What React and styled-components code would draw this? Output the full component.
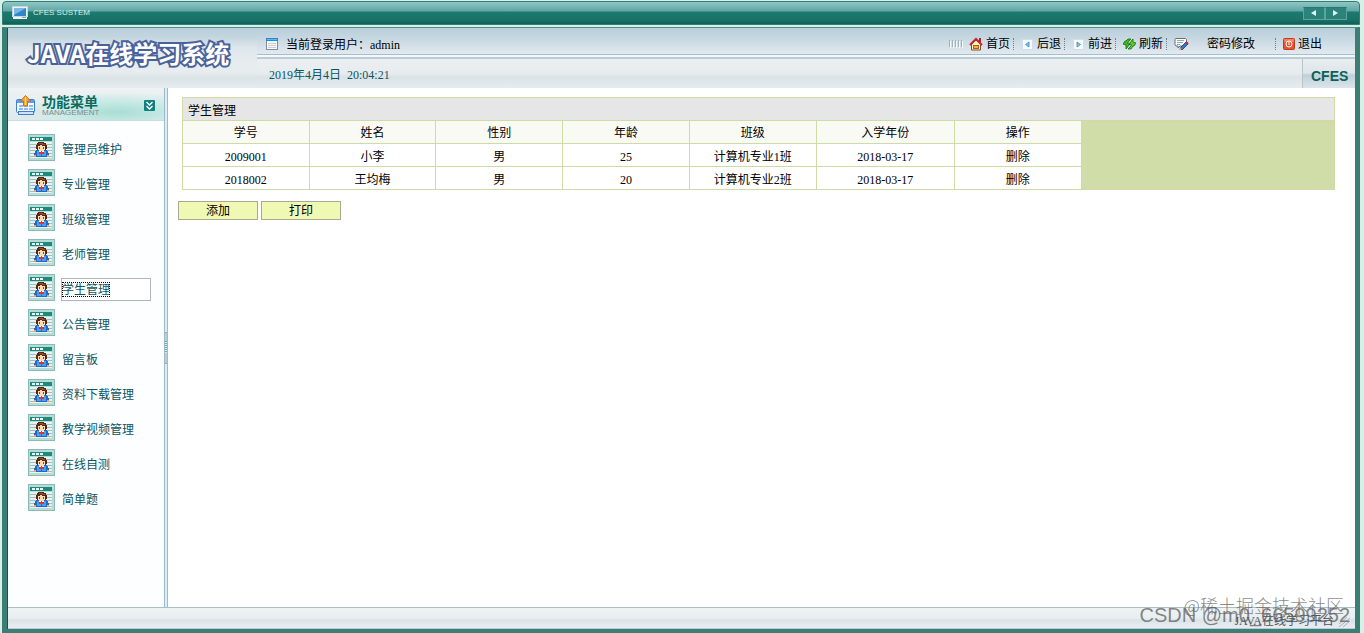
import React from "react";
import styled, { createGlobalStyle, css } from "styled-components";

const Global = createGlobalStyle`
  *, *::before, *::after { box-sizing: border-box; }
  body {
    margin: 0;
    background: #d9efea;
    color: #000;
    font-family: "Liberation Serif", "Noto Sans CJK SC", serif;
    font-size: 12px;
    line-height: 18px;
  }
  button {
    font: inherit;
    color: inherit;
    cursor: pointer;
  }
`;

const Shell = styled.div`
  position: relative;
  display: flex;
  flex-direction: column;
  gap: 2px;
  min-height: 100vh;
  padding: 1px 4px 0 2px;
`;

const TitleBar = styled.div`
  display: flex;
  align-items: center;
  gap: 5px;
  height: 24px;
  padding: 0 12px 0 9px;
  border: 1px solid #2f7f76;
  border-radius: 4px 4px 0 0;
  background: linear-gradient(#8fc6c6 0, #62a6a6 9px, #1b7a6e 10px, #1a7167 18px, #0d6258 100%);
`;

const TitleText = styled.span`
  flex: 1;
  color: #d3efeb;
  font: 8px/12px "Liberation Sans", sans-serif;
`;

const Pager = styled.div`
  display: flex;
`;

const PagerButton = styled.button`
  display: flex;
  align-items: center;
  justify-content: center;
  width: 22px;
  height: 13px;
  padding: 0;
  border: 1px solid #5ea39c;
  border-top-color: #2c756d;
  background: #2b8379;
`;

const Frame = styled.div`
  flex: 1;
  display: flex;
  flex-direction: column;
  border: 5px solid #3b7f74;
  border-top: 1px solid #4f9189;
  border-bottom-width: 4px;
  padding-left: 1px;
  background: #14544b;
`;

const Header = styled.header`
  display: flex;
  height: 60px;
  background: linear-gradient(#b9cfdb 0, #c3d5df 9px, #dfe7ec 20px, #e6ebee 34px, #e7ecef 44px, #dbe3e6 50px, #e6ecef 100%);
`;

const Brand = styled.h1`
  flex: none;
  width: 249px;
  margin: 0;
  padding: 7px 0 0 19px;
  color: #fff;
  font: bold 24px/36px "Noto Sans CJK SC", sans-serif;
  white-space: nowrap;
  -webkit-text-stroke: 4px #4a629b;
  paint-order: stroke fill;
`;

const HeaderMain = styled.div`
  flex: 1;
  display: flex;
  flex-direction: column;
`;

const UserRow = styled.div`
  flex: none;
  display: flex;
  align-items: center;
  justify-content: space-between;
  height: 31px;
  padding: 2px 33px 0 9px;
  border-bottom: 2px solid #b8cdd8;
  background: linear-gradient(#b9cfdb 0, #c3d5df 8px, #e2e9f0 100%) no-repeat 0 0 / 100% 26px, linear-gradient(#a8bfca, #a8bfca) no-repeat 0 26px / 100% 1px, #f4f8fa;
`;

const UserInfo = styled.div`
  display: flex;
  align-items: center;
  gap: 8px;
  span { padding-top: 2px; }
`;

const Nav = styled.nav`
  display: flex;
  align-items: center;
`;

const NavButton = styled.button`
  display: flex;
  align-items: center;
  gap: ${(p) => (p.$wide ? 18 : 3)}px;
  padding: 0 ${(p) => (p.$wide ? 20 : 3)}px 0 6px;
  border: 0;
  background: none;
  line-height: 18px;
  &:last-child { padding-right: 0; }
`;

const NavDivider = styled.i`
  height: 12px;
  margin-right: 1px;
  border-left: 1px dotted #6f8089;
`;

const DateRow = styled.div`
  flex: 1;
  min-height: 0;
  display: flex;
  align-items: stretch;
  justify-content: space-between;
  padding-left: 12px;
  color: #0b5563;
  line-height: 32px;
  white-space: pre;
  background: linear-gradient(#eceff1 0, #e7ecef 14px, #dbe3e6 18px, #e6ecef 100%);
`;

const Badge = styled.div`
  width: 53px;
  padding-left: 8px;
  border-left: 1px solid #b9c6cc;
  background: linear-gradient(#e9edf0 0, #dde6eb 14px, #bfd0da 16px, #dbe5eb 100%);
  color: #0b6156;
  font: bold 14px/34px "Liberation Sans", sans-serif;
`;

const Body = styled.div`
  flex: 1;
  display: flex;
`;

const Sidebar = styled.aside`
  flex: none;
  width: 156px;
  background: #fcfeff;
`;

const SideHead = styled.div`
  display: flex;
  align-items: center;
  gap: 6px;
  height: 33px;
  padding: 2px 9px 0 8px;
  border-bottom: 1px solid #c9dfe0;
  background: radial-gradient(ellipse 100px 20px at 110px 24px, #a9ddd5 0, #cdebe7 60%, transparent 100%), linear-gradient(#f0f2f4, #dfe8ec);
`;

const SideTitle = styled.div`
  flex: 1;
  padding-top: 1px;
  color: #0b6b60;
  font: bold 14px/14px "Noto Sans CJK SC", sans-serif;
  small {
    display: block;
    color: #7d8a8e;
    font: 8px/10px "Liberation Sans", sans-serif;
  }
`;

const CollapseButton = styled.button`
  display: flex;
  padding: 0;
  border: 0;
  background: none;
`;

const Menu = styled.ul`
  margin: 0;
  padding: 13px 13px 0 20px;
  list-style: none;
`;

const MenuItem = styled.li`
  display: flex;
  align-items: flex-start;
  gap: 6px;
  height: 35px;
`;

const MenuLink = styled.a`
  flex: 1;
  height: 23px;
  margin-top: 4px;
  padding-top: 3px;
  border: 1px solid transparent;
  color: #0b5563;
  line-height: 16px;
  text-decoration: none;
  white-space: nowrap;
  span { display: inline-block; height: 15px; line-height: 16px; }
  ${(p) =>
    p.$active &&
    css`
      border-color: #b4b4b4;
      background: #fff;
      span { outline: 1px dotted #000; outline-offset: -1px; }
    `}
`;

const Splitter = styled.div`
  flex: none;
  display: flex;
  align-items: center;
  width: 4px;
  border: solid #9dbccb;
  border-width: 0 1px;
  background: #dcebf5;
`;

const SplitterGrip = styled.i`
  flex: 1;
  height: 32px;
  border: 1px solid #8fb0bd;
  border-width: 1px 0;
  background: linear-gradient(#b4cfda 0 8px, transparent 8px 20px, #b4cfda 20px), repeating-linear-gradient(#7ea3b2 0 1px, #dbe9f0 1px 2px);
`;

const Content = styled.main`
  flex: 1;
  padding: 9px 20px 0 10px;
  background: #fff;
`;

const Table = styled.table`
  width: calc(100% - 4px);
  margin-left: 4px;
  table-layout: fixed;
  border-collapse: collapse;
  border: 1px solid #cedba6;
  background: #d1dda8;
`;

const TitleCell = styled.th`
  height: 23px;
  padding: 3px 5px 0;
  border: 1px solid #cedba6;
  background: #e6e6e6;
  font-weight: normal;
  text-align: left;
`;

const cell = css`
  height: 23px;
  border: 1px solid #cedba6;
  font-weight: normal;
  text-align: center;
`;

const HeadCell = styled.th`
  ${cell}
  padding: 2px 0 0;
  background: #fafaf4;
`;

const DataCell = styled.td`
  ${cell}
  padding: 3px 0 0;
  background: #fff;
`;

const FillCell = styled.td`
  padding: 0;
`;

const Actions = styled.div`
  display: flex;
  gap: 3px;
  margin-top: 11px;
`;

const ActionButton = styled.button`
  width: 80px;
  height: 19px;
  padding: 2px 0 0;
  border: 1px solid #a8aa92;
  background: #eff9b3;
  line-height: 15px;
`;

const PlainButton = styled.button`
  padding: 0;
  border: 0;
  background: none;
`;

const Footer = styled.footer`
  display: flex;
  justify-content: flex-end;
  align-items: flex-end;
  gap: 5px;
  height: 22px;
  padding-right: 5px;
  border-top: 1px solid #a9bfc6;
  border-bottom: 1px solid #b9cbd0;
  background: linear-gradient(#eef2f4 0, #e9eef0 10px, #d9e3e5 12px, #e3e9ef 16px, #e8ebf3 100%);
  color: #4c5357;
  line-height: 14px;
`;

const Mark = styled.div`
  position: absolute;
  right: ${(p) => p.$right}px;
  bottom: ${(p) => p.$bottom}px;
  color: rgba(95, 95, 95, 0.75);
  font: 300 ${(p) => p.$size}px/24px ${(p) => (p.$latin ? '"Liberation Sans",' : "")} "Noto Sans CJK SC", sans-serif;
  white-space: nowrap;
  pointer-events: none;
`;

const MonitorIcon = () => (
  <svg width="16" height="14" viewBox="0 0 16 14" aria-hidden="true">
    <rect x="0.5" y="0.5" width="15" height="10" fill="#e8f1f5" stroke="#c7d9df" />
    <rect x="2" y="2" width="12" height="8" fill="#2f86c9" />
    <path d="M2 2h12L2 9z" fill="#79b9e6" />
    <path d="M1 11h14v2H1z" fill="#eef4f5" />
    <rect x="10" y="11" width="4" height="1" fill="#8aa7ad" />
  </svg>
);

const WindowIcon = () => (
  <svg width="12" height="12" viewBox="0 0 12 12" aria-hidden="true">
    <rect x="0.5" y="0.5" width="11" height="11" fill="#f7f9fa" stroke="#7c8da0" />
    <rect x="0" y="0" width="12" height="3" fill="#2e86d3" />
    <path d="M1 1.5h10" stroke="#55bdf0" />
    <path d="M2 5.5h8M2 7.5h8M2 9.5h8" stroke="#c9ced2" />
  </svg>
);

const Grip = () => (
  <svg width="14" height="8" viewBox="0 0 14 8" aria-hidden="true">
    <path d="M0.5 0v7M3.5 0v7M6.5 0v7M9.5 0v7M12.5 0v7" stroke="#9fb2be" />
    <path d="M1.5 1v7M4.5 1v7M7.5 1v7M10.5 1v7M13.5 1v7" stroke="#f4f8fa" />
  </svg>
);

const HomeIcon = () => (
  <svg width="14" height="14" viewBox="0 0 14 14" aria-hidden="true">
    <path d="M2.5 7v6h9V7L7 3z" fill="#fff3c9" stroke="#8a4b2a" />
    <rect x="10" y="1" width="2" height="4" fill="#a4252a" />
    <path d="M1 8 7 2l6 6" fill="none" stroke="#c8242c" strokeWidth="2" />
    <rect x="4.5" y="8.5" width="5" height="3" fill="#f3b51f" stroke="#a7651c" />
  </svg>
);

const ArrowIcon = ({ flip }) => (
  <svg width="13" height="12" viewBox="0 0 13 12" aria-hidden="true">
    <rect x="1.5" y="1.5" width="10" height="10" fill="#f7fafc" stroke="#d3dfe6" />
    <path d={flip ? "M5 4v5l3.500-2.500z" : "M8 4v5L4.500 6.500z"} fill="#8cc4e6" stroke="#3b86bd" strokeWidth="0.8" />
  </svg>
);

const RefreshIcon = () => (
  <svg width="13" height="12" viewBox="0 0 13 12" aria-hidden="true">
    <path d="M0 6 2 3h1l2-2h3L5 4v2h2l-4 5V7z" fill="#3fb81f" stroke="#17690d" strokeWidth="0.8" />
    <path d="M13 5 11 8h-1l-2 3H5l3-3V6H6l4-5v3z" fill="#58cd2b" stroke="#17690d" strokeWidth="0.8" />
  </svg>
);

const EditIcon = () => (
  <svg width="15" height="14" viewBox="0 0 15 14" aria-hidden="true">
    <path d="M1.5 1.5h10l1 1v5l-2 1.500H6l-2 2v-2H2L1 7.500v-5z" fill="#f8fafb" stroke="#62707a" />
    <path d="M3 3.500h7M3 5.500h6M3 7.500h3" stroke="#9aa7b0" />
    <path d="m6 11 6-6 2 2-6 6z" fill="#2f78cf" stroke="#1b3d78" strokeWidth="0.8" />
    <path d="m5 13 1-3 2 2z" fill="#e98a2c" />
    <path d="m12 5 2 2" stroke="#c8242c" strokeWidth="2" />
  </svg>
);

const PowerIcon = () => (
  <svg width="12" height="12" viewBox="0 0 12 12" aria-hidden="true">
    <rect x="0.5" y="0.5" width="11" height="11" rx="1" fill="#e2532f" stroke="#c23a1c" />
    <path d="M1 1h10v3H1z" fill="#f08161" />
    <circle cx="6" cy="6" r="3" fill="none" stroke="#fff" />
    <path d="M6 4v3" stroke="#fff" />
  </svg>
);

const CalendarIcon = () => (
  <svg width="20" height="21" viewBox="0 0 20 21" aria-hidden="true">
    <rect x="0.5" y="4.5" width="18" height="13" rx="1" fill="#f4f9ff" stroke="#3c7fd6" />
    <rect x="1" y="5" width="17" height="3" fill="#5f9ee8" />
    <path d="M3 11h4M8 11h4M13 11h4M3 14h4M8 14h4M13 14h4" stroke="#8fbcf0" strokeWidth="2" />
    <rect x="2.5" y="16.5" width="15" height="3" fill="#cfe4fb" stroke="#3c7fd6" />
    <path d="M9.5 0.5 14.5 6h-3v5h-4V6h-3z" fill="#f9a93a" stroke="#c8701a" />
    <path d="M9.5 2v8" stroke="#ffd98c" />
  </svg>
);

const CollapseIcon = () => (
  <svg width="11" height="11" viewBox="0 0 11 11" aria-hidden="true">
    <rect width="11" height="11" rx="1" fill="#13807f" />
    <path d="m2.500 2 3 3 3-3M2.500 6l3 3 3-3" fill="none" stroke="#fff" strokeWidth="1.300" />
  </svg>
);

const PersonIcon = () => (
  <svg width="27" height="27" viewBox="0 0 27 27" shapeRendering="crispEdges" aria-hidden="true">
    <rect width="27" height="27" fill="#8db9b6" />
    <rect x="1" y="1" width="25" height="25" fill="#b5dcd7" />
    <rect x="2" y="3" width="22" height="4" fill="#1d8a7c" />
    <path d="M4 5h3M8 5h3M12 5h3" stroke="#e6fffb" strokeWidth="2" />
    <rect x="2" y="8" width="22" height="16" fill="#e6f3f2" />
    <path d="M2 10.5h22M2 13.5h22M2 16.5h22M2 19.5h22M2 22.5h22" stroke="#a3bdbc" />
    <path d="M10 8h6v1h2v2h1v4h-1v1H9v-1H8v-4h1V9h1z" fill="#5a2413" />
    <path d="M11 9h4v1h2v1h-3v-1h-3z" fill="#94502a" />
    <path d="M10 12h2v-1h2v1h3v4h-1v1h-5v-1h-1z" fill="#fddcb4" />
    <path d="M11 13h1v2h-1zM15 13h1v2h-1z" fill="#8a4a2a" />
    <path d="M8 16h3v1h5v-1h3v1h1v2h1v3h-2v1H8v-1H6v-3h1v-2h1z" fill="#2468c6" />
    <path d="M9 17h2v3h2v2H9zM16 17h2v5h-4v-2h2z" fill="#4e9cec" />
    <path d="M11 17h5v1h-1v1h-3v-1h-1z" fill="#fff" />
    <path d="M13 17h1v1h1v2h-1v1h-1v-1h-1v-2h1z" fill="#e0342f" />
    <path d="M6 21h2v2H6zM19 21h2v2h-2z" fill="#f1a65c" />
  </svg>
);

const ResizeIcon = () => (
  <svg width="11" height="12" viewBox="0 0 11 12" aria-hidden="true">
    <path d="m0 8 8-7M0 11l11-9M4 11l7-6" stroke="#9ba7ad" strokeWidth="0.8" />
  </svg>
);

const menu = ["管理员维护", "专业管理", "班级管理", "老师管理", "学生管理", "公告管理", "留言板", "资料下载管理", "教学视频管理", "在线自测", "简单题"];

const nav = [
  { label: "首页", icon: <HomeIcon /> },
  { label: "后退", icon: <ArrowIcon /> },
  { label: "前进", icon: <ArrowIcon flip /> },
  { label: "刷新", icon: <RefreshIcon /> },
  { label: "密码修改", icon: <EditIcon />, wide: true },
  { label: "退出", icon: <PowerIcon /> },
];

const columns = [
  ["学号", "11%"],
  ["姓名", "11%"],
  ["性别", "11%"],
  ["年龄", "11%"],
  ["班级", "11%"],
  ["入学年份", "12%"],
  ["操作", "11%"],
];

const students = [
  ["2009001", "小李", "男", "25", "计算机专业1班", "2018-03-17"],
  ["2018002", "王均梅", "男", "20", "计算机专业2班", "2018-03-17"],
];

export default function App() {
  return (
    <>
      <Global />
      <Shell>
        <TitleBar>
          <MonitorIcon />
          <TitleText>CFES SUSTEM</TitleText>
          <Pager>
            <PagerButton aria-label="上一页">
              <svg width="6" height="6" viewBox="0 0 6 6"><path d="M5 0v6L0 3z" fill="#e4f6f3" /></svg>
            </PagerButton>
            <PagerButton aria-label="下一页">
              <svg width="6" height="6" viewBox="0 0 6 6"><path d="M0 0v6l5-3z" fill="#e4f6f3" /></svg>
            </PagerButton>
          </Pager>
        </TitleBar>
        <Frame>
          <Header>
            <Brand>JAVA在线学习系统</Brand>
            <HeaderMain>
              <UserRow>
                <UserInfo>
                  <WindowIcon />
                  <span>当前登录用户：admin</span>
                </UserInfo>
                <Nav>
                  <Grip />
                  {nav.map((item, i) => (
                    <React.Fragment key={item.label}>
                      {i > 0 && <NavDivider />}
                      <NavButton $wide={item.wide}>
                        {item.icon}
                        {item.label}
                      </NavButton>
                    </React.Fragment>
                  ))}
                </Nav>
              </UserRow>
              <DateRow>
                <span>2019年4月4日{"  "}20:04:21</span>
                <Badge>CFES</Badge>
              </DateRow>
            </HeaderMain>
          </Header>
          <Body>
            <Sidebar>
              <SideHead>
                <CalendarIcon />
                <SideTitle>
                  功能菜单
                  <small>MANAGEMENT</small>
                </SideTitle>
                <CollapseButton aria-label="折叠菜单">
                  <CollapseIcon />
                </CollapseButton>
              </SideHead>
              <Menu>
                {menu.map((label) => (
                  <MenuItem key={label}>
                    <PersonIcon />
                    <MenuLink href="#" $active={label === "学生管理"}>
                      <span>{label}</span>
                    </MenuLink>
                  </MenuItem>
                ))}
              </Menu>
            </Sidebar>
            <Splitter>
              <SplitterGrip />
            </Splitter>
            <Content>
              <Table>
                <colgroup>
                  {columns.map(([name, width]) => (
                    <col key={name} width={width} />
                  ))}
                  <col />
                </colgroup>
                <thead>
                  <tr>
                    <TitleCell colSpan={8}>学生管理</TitleCell>
                  </tr>
                  <tr>
                    {columns.map(([name]) => (
                      <HeadCell key={name} scope="col">{name}</HeadCell>
                    ))}
                    <FillCell />
                  </tr>
                </thead>
                <tbody>
                  {students.map((row) => (
                    <tr key={row[0]}>
                      {row.map((value, i) => (
                        <DataCell key={i}>{value}</DataCell>
                      ))}
                      <DataCell>
                        <PlainButton>删除</PlainButton>
                      </DataCell>
                      <FillCell />
                    </tr>
                  ))}
                </tbody>
              </Table>
              <Actions>
                <ActionButton>添加</ActionButton>
                <ActionButton>打印</ActionButton>
              </Actions>
            </Content>
          </Body>
          <Footer>
            <span>JAVA在线学习平台</span>
            <ResizeIcon />
          </Footer>
        </Frame>
        <Mark $right={20} $bottom={16} $size={18}>@稀土掘金技术社区</Mark>
        <Mark $right={14} $bottom={6} $size={20} $latin>CSDN @m0_66599252</Mark>
      </Shell>
    </>
  );
}
